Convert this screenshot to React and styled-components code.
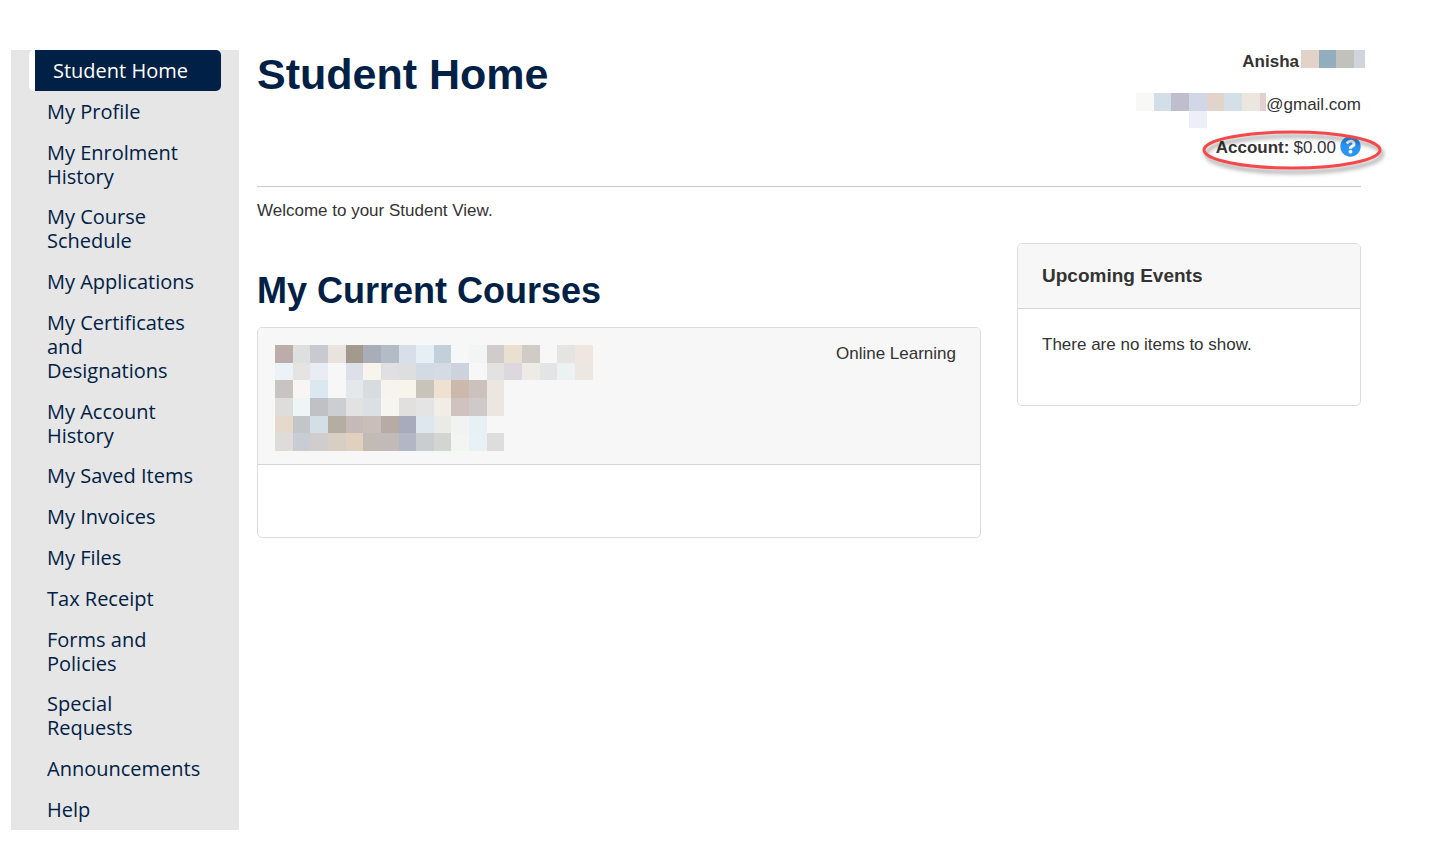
import styled, { createGlobalStyle } from 'styled-components';
import { FaQuestionCircle } from 'react-icons/fa';

const GlobalStyle = createGlobalStyle`
  * {
    box-sizing: border-box;
  }
  body {
    margin: 0;
    background: #fff;
    color: #333;
    font-family: 'Liberation Sans', Arial, sans-serif;
    font-size: 17px;
    line-height: 24px;
  }
  h1, h2, h3, p, ul {
    margin: 0;
    padding: 0;
  }
`;

const Page = styled.div`
  display: grid;
  grid-template-columns: 1fr 5fr;
  align-items: start;
  padding: 50px 52px 28px 11px;
`;

const Sidebar = styled.nav`
  background: #e6e6e6;
  padding: 0 18px;
`;

const NavList = styled.ul`
  display: flex;
  flex-direction: column;
  justify-content: space-between;
  min-height: calc(100vh - 78px);
  list-style: none;
`;

const NavLink = styled.a`
  display: block;
  padding: ${({ $active }) => ($active ? '9px 18px 8px' : '8px 20px 8px 18px')};
  border-left: ${({ $active }) => ($active ? '6px solid #fff' : '0')};
  border-radius: 5px;
  background: ${({ $active }) => ($active ? '#002145' : 'transparent')};
  color: ${({ $active }) => ($active ? '#fff' : '#002145')};
  font-family: 'Open Sans', sans-serif;
  font-size: 20px;
  line-height: 24px;
  text-decoration: none;
`;

const Content = styled.main`
  padding: 0 18px;
`;

const Header = styled.header`
  display: flex;
  justify-content: space-between;
  min-height: 137px;
  border-bottom: 1px solid #ccc;
`;

const Title = styled.h1`
  color: #002145;
  font-size: 43px;
  line-height: 48px;
`;

const UserInfo = styled.div`
  display: flex;
  flex-direction: column;
  align-items: flex-end;
  gap: 19px;
`;

const UserLine = styled.div`
  display: flex;
  align-items: flex-start;
  gap: ${({ $gap }) => $gap || 0}px;
`;

const NameMosaic = styled.div`
  display: flex;
  margin-right: -4px;
`;

const CourseMosaic = styled.div`
  padding-top: 3px;
`;

const Mosaic = styled.svg`
  display: block;
  flex: none;
  overflow: visible;
`;

const Account = styled(UserLine)`
  position: relative;
`;

const HelpButton = styled.button`
  display: flex;
  padding: 0;
  border: 0;
  background: none;
  color: #2b93f0;
  font-size: 21px;
  cursor: pointer;
`;

const Highlight = styled.svg`
  position: absolute;
  top: -6px;
  right: -21px;
  overflow: visible;
  pointer-events: none;
  filter: drop-shadow(2px 4px 2px rgba(0, 0, 0, 0.4));
`;

const Welcome = styled.p`
  padding: 12px 0 20px;
`;

const Columns = styled.div`
  display: grid;
  grid-template-columns: 2fr 1fr;
  align-items: start;
  margin: 0 -18px;
`;

const Column = styled.section`
  padding: 0 18px;
`;

const SectionTitle = styled.h2`
  padding: 24px 0 12px;
  color: #002145;
  font-size: 36px;
  line-height: 48px;
`;

const Card = styled.div`
  overflow: hidden;
  border: 1px solid #ddd;
  border-radius: 5px;
`;

const CardHeader = styled.div`
  display: flex;
  justify-content: space-between;
  padding: ${({ $course }) => ($course ? '14px 24px 14px 17px' : '20px 24px')};
  border-bottom: 1px solid #d5d5d5;
  background: #f7f7f7;
`;

const CourseBody = styled.div`
  min-height: 72px;
`;

const EventsTitle = styled.h3`
  font-size: 19px;
  line-height: 24px;
`;

const EventsBody = styled.p`
  min-height: 96px;
  padding: 24px;
`;

const navItems = [
  'Student Home',
  'My Profile',
  'My Enrolment History',
  'My Course Schedule',
  'My Applications',
  'My Certificates and Designations',
  'My Account History',
  'My Saved Items',
  'My Invoices',
  'My Files',
  'Tax Receipt',
  'Forms and Policies',
  'Special Requests',
  'Announcements',
  'Help',
];

const courseRows = [
  ['#bdadaa', '#dde0de', '#c9cad0', '#e8e3dd', '#a3998d', '#a9adb8', '#b3bbc6', '#d8dfea', '#e7eff6', '#c2d0db', '#f6f8f7', '#f3f5f4', '#d1cccc', '#e9e0d0', '#d0cbc4', '#f7f7f7', '#e4e4e2', '#eee6df'],
  ['#ecf3f6', '#e5e4e2', '#e9edf3', '#f7f7f7', '#dde0e9', '#f7f3ed', '#e0e0e2', '#dddfdf', '#d2dbe3', '#d4dbe3', '#ced2dc', '#f7f7f7', '#e2e2e2', '#ddd8dd', '#ecebe6', '#e2e4e6', '#ecf1f2', '#ece7e0'],
  ['#c8c4c1', '#f7f6f4', '#dce8f0', '#f7f7f7', '#e3e8ea', '#d8dcdf', '#f7f4ed', '#f6f4eb', '#c8c4ba', '#eee1d1', '#cbb9ab', '#cdc1bd', '#ebe6df'],
  ['#dedddb', '#eff5f5', '#bfc1c4', '#cdced2', '#e2e2e2', '#dce0e3', '#f6f5f0', '#e1e0df', '#e4e4e4', '#f1ece5', '#cfc3bf', '#cfc9c7', '#ebe6df'],
  ['#e4d9cc', '#c3c6c9', '#d4dee6', '#b6ada2', '#c5bab8', '#c9beb9', '#b6aca3', '#a8abbb', '#dfe7ee', '#eaebe6', '#f1f3f2', '#e7f1f4'],
  ['#dddcd9', '#c9ccd2', '#d1cdcc', '#d7cec4', '#e1d0bd', '#c2bab4', '#c2bab8', '#b3b7c5', '#c9cdcf', '#d3d5d3', '#f3f5f2', '#e8f2f6', '#dddddd'],
];

const nameRow = [['#e3d2c7', '#92adbd', '#c2c2bd', '#d1d4da']];

const emailRows = [
  ['#f8f8f6', '#d2dfe8', '#bfbdce', '#d2d6e6', '#e2d4ca', '#d5dfe7', '#ebe6df', '#e2cfd1'],
  [null, null, null, '#eeeef8'],
];

// the tiles alternate between 17 and 18 pixels
const edge = (n) => Math.round(n * 17.645);

function Tiles({ rows, width, height }) {
  return (
    <Mosaic width={width} height={height} aria-hidden="true">
      {rows.map((row, y) =>
        row.map((fill, x) => {
          if (!fill) return null;
          const left = edge(x);
          return (
            <rect
              key={`${x}-${y}`}
              x={left}
              y={edge(y)}
              width={Math.min(edge(x + 1), width) - left}
              height={edge(y + 1) - edge(y)}
              fill={fill}
            />
          );
        })
      )}
    </Mosaic>
  );
}

export default function App() {
  return (
    <>
      <GlobalStyle />
      <Page>
        <Sidebar aria-label="Student menu">
          <NavList>
            {navItems.map((item, i) => (
              <li key={item}>
                <NavLink href="#" $active={i === 0}>{item}</NavLink>
              </li>
            ))}
          </NavList>
        </Sidebar>
        <Content>
          <Header>
            <Title>Student Home</Title>
            <UserInfo>
              <UserLine $gap={2}>
                <strong>Anisha</strong>
                <NameMosaic>
                  <Tiles rows={nameRow} width={64} height={18} />
                </NameMosaic>
              </UserLine>
              <UserLine>
                <Tiles rows={emailRows} width={130} height={18} />
                <span>@gmail.com</span>
              </UserLine>
              <Account $gap={4}>
                <strong>Account:</strong>
                <span>$0.00</span>
                <HelpButton type="button" aria-label="Account help">
                  <FaQuestionCircle />
                </HelpButton>
                <Highlight width="188" height="42" viewBox="0 0 188 42" aria-hidden="true">
                  <ellipse cx="98" cy="20" rx="88" ry="18" fill="none" stroke="#f4484a" strokeWidth="3" />
                </Highlight>
              </Account>
            </UserInfo>
          </Header>
          <Welcome>Welcome to your Student View.</Welcome>
          <Columns>
            <Column>
              <SectionTitle>My Current Courses</SectionTitle>
              <Card>
                <CardHeader $course>
                  <CourseMosaic>
                    <Tiles rows={courseRows} width={318} height={105} />
                  </CourseMosaic>
                  <span>Online Learning</span>
                </CardHeader>
                <CourseBody />
              </Card>
            </Column>
            <Column>
              <Card>
                <CardHeader>
                  <EventsTitle>Upcoming Events</EventsTitle>
                </CardHeader>
                <EventsBody>There are no items to show.</EventsBody>
              </Card>
            </Column>
          </Columns>
        </Content>
      </Page>
    </>
  );
}
